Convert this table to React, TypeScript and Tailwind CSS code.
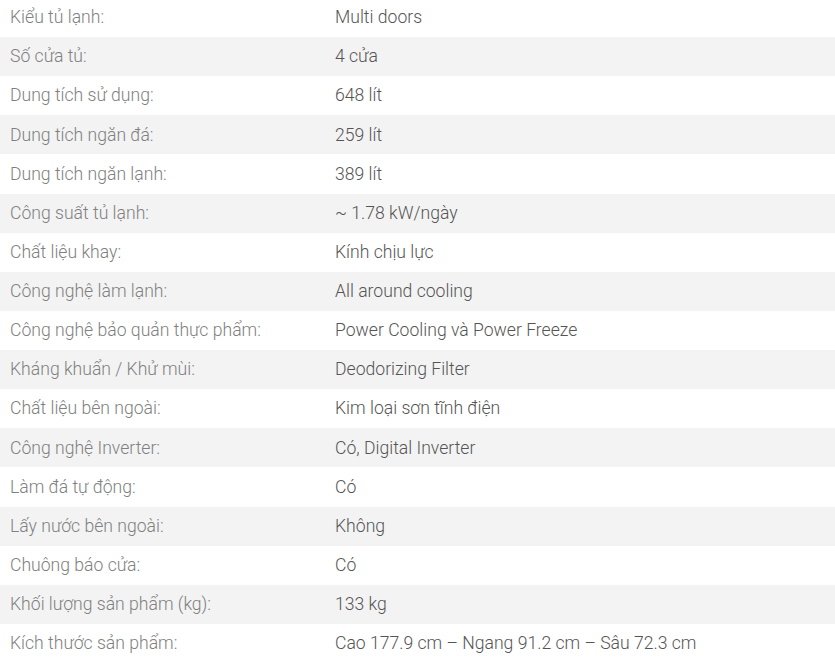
const specs: [string, string][] = [
  ["Kiểu tủ lạnh:", "Multi doors"],
  ["Số cửa tủ:", "4 cửa"],
  ["Dung tích sử dụng:", "648 lít"],
  ["Dung tích ngăn đá:", "259 lít"],
  ["Dung tích ngăn lạnh:", "389 lít"],
  ["Công suất tủ lạnh:", "~ 1.78 kW/ngày"],
  ["Chất liệu khay:", "Kính chịu lực"],
  ["Công nghệ làm lạnh:", "All around cooling"],
  ["Công nghệ bảo quản thực phẩm:", "Power Cooling và Power Freeze"],
  ["Kháng khuẩn / Khử mùi:", "Deodorizing Filter"],
  ["Chất liệu bên ngoài:", "Kim loại sơn tĩnh điện"],
  ["Công nghệ Inverter:", "Có, Digital Inverter"],
  ["Làm đá tự động:", "Có"],
  ["Lấy nước bên ngoài:", "Không"],
  ["Chuông báo cửa:", "Có"],
  ["Khối lượng sản phẩm (kg):", "133 kg"],
  ["Kích thước sản phẩm:", "Cao 177.9 cm – Ngang 91.2 cm – Sâu 72.3 cm"],
];

export default function App() {
  return (
    <div className="w-[835px] h-[663px] overflow-hidden bg-white font-['Roboto',sans-serif] font-light text-[17.6px]">
      <div className="-mt-[2.14px]">
        {specs.map(([label, value], i) => (
          <div
            key={label}
            className={`flex items-center h-[39.14px] ${i % 2 === 1 ? "bg-[#f3f3f3]" : "bg-white"}`}
          >
            <div className="w-[335px] pl-[10px] text-[#808080]">{label}</div>
            <div className="flex-1 text-[#555555]">{value}</div>
          </div>
        ))}
      </div>
    </div>
  );
}
